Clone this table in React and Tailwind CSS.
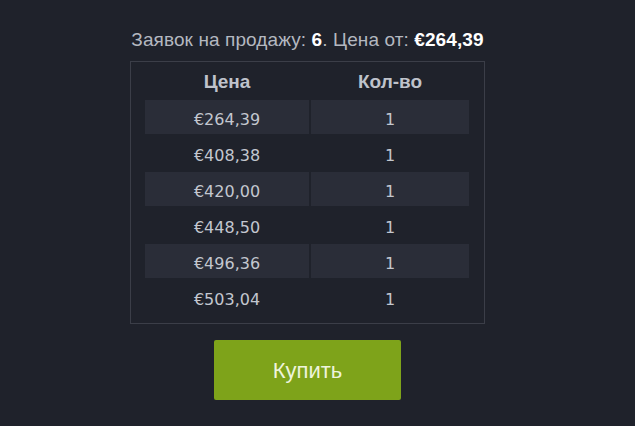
import React from "react";

const rows = ["€264,39", "€408,38", "€420,00", "€448,50", "€496,36", "€503,04"];

export default function App() {
  return (
    <div className="w-[635px] h-[426px] bg-[#1f222b] pr-[20px]">
      <div className="flex flex-col items-center pt-[27px]">
        <div className="font-['Liberation_Sans',Arial,sans-serif] text-[19px] leading-[26px] tracking-[0.1px] text-[#b4b8c0] whitespace-nowrap">
          Заявок на продажу: <span className="font-bold text-white">6</span>. Цена от: <span className="font-bold text-white">€264,39</span>
        </div>
        <div className="mt-[8px] w-[355px] h-[263px] border border-[#3b3e48] pl-[14px] pr-[15px]">
          <div className="flex gap-[2px] h-[38px] items-center pt-[3px] font-['Liberation_Sans',Arial,sans-serif] font-bold text-[19px] text-[#bfc3cb]">
            <div className="w-[164px] text-center">Цена</div>
            <div className="w-[158px] text-center">Кол-во</div>
          </div>
          <div className="flex flex-col gap-[2px]">
            {rows.map((p, i) => (
              <div key={i} className="flex gap-[2px] h-[34px] font-['DejaVu_Sans',Verdana,sans-serif] text-[16px] text-[#c3c7cf]">
                <div className={"w-[164px] flex items-center justify-center pt-[5px] " + (i % 2 === 0 ? "bg-[#2a2d38]" : "")}>{p}</div>
                <div className={"w-[158px] flex items-center justify-center pt-[5px] " + (i % 2 === 0 ? "bg-[#2a2d38]" : "")}>1</div>
              </div>
            ))}
          </div>
        </div>
        <div className="mt-[16px] w-[187px] h-[60px] rounded-[2px] bg-[#7ea31a] flex items-center justify-center font-['Liberation_Sans',Arial,sans-serif] text-[22px] text-[#eef4dc]">
          Купить
        </div>
      </div>
    </div>
  );
}
